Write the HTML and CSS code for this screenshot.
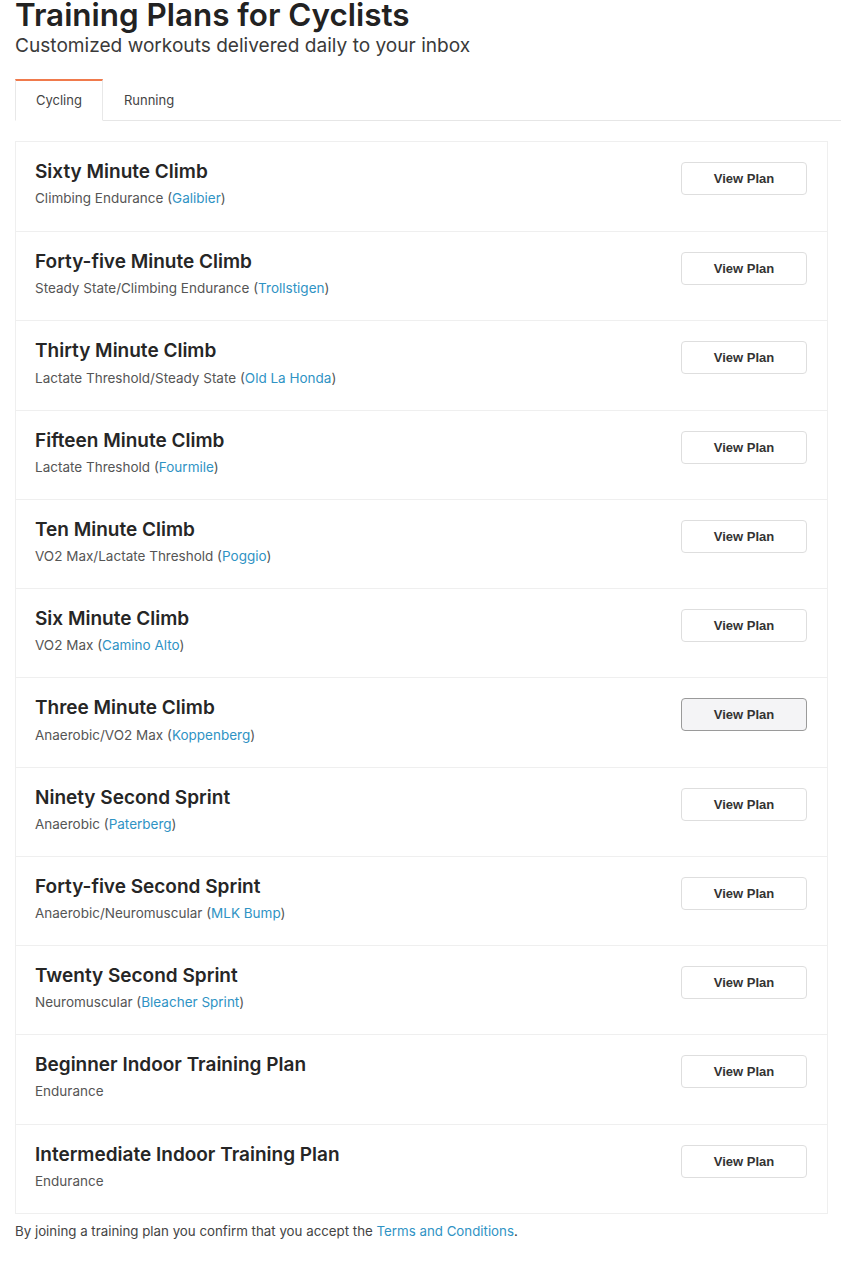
FILE: index.html
```html
<!DOCTYPE html>
<html lang="en">
<head>
<meta charset="utf-8">
<title>Training Plans for Cyclists</title>
<link rel="stylesheet" href="styles.css">
</head>
<body>
<div class="page">
  <header class="header">
    <h1 class="title">Training Plans for Cyclists</h1>
    <p class="subtitle">Customized workouts delivered daily to your inbox</p>
  </header>
  <nav class="tabs">
    <a class="tab tab-active">Cycling</a>
    <a class="tab">Running</a>
  </nav>
  <ul class="plans">
    <li class="plan"><div class="plan-info"><h3 class="plan-name">Sixty Minute Climb</h3><p class="plan-desc">Climbing Endurance (<a class="link">Galibier</a>)</p></div><button class="btn">View Plan</button></li>
    <li class="plan"><div class="plan-info"><h3 class="plan-name">Forty-five Minute Climb</h3><p class="plan-desc">Steady State/Climbing Endurance (<a class="link">Trollstigen</a>)</p></div><button class="btn">View Plan</button></li>
    <li class="plan"><div class="plan-info"><h3 class="plan-name">Thirty Minute Climb</h3><p class="plan-desc">Lactate Threshold/Steady State (<a class="link">Old La Honda</a>)</p></div><button class="btn">View Plan</button></li>
    <li class="plan"><div class="plan-info"><h3 class="plan-name">Fifteen Minute Climb</h3><p class="plan-desc">Lactate Threshold (<a class="link">Fourmile</a>)</p></div><button class="btn">View Plan</button></li>
    <li class="plan"><div class="plan-info"><h3 class="plan-name">Ten Minute Climb</h3><p class="plan-desc">VO2 Max/Lactate Threshold (<a class="link">Poggio</a>)</p></div><button class="btn">View Plan</button></li>
    <li class="plan"><div class="plan-info"><h3 class="plan-name">Six Minute Climb</h3><p class="plan-desc">VO2 Max (<a class="link">Camino Alto</a>)</p></div><button class="btn">View Plan</button></li>
    <li class="plan"><div class="plan-info"><h3 class="plan-name">Three Minute Climb</h3><p class="plan-desc">Anaerobic/VO2 Max (<a class="link">Koppenberg</a>)</p></div><button class="btn btn-hover">View Plan</button></li>
    <li class="plan"><div class="plan-info"><h3 class="plan-name">Ninety Second Sprint</h3><p class="plan-desc">Anaerobic (<a class="link">Paterberg</a>)</p></div><button class="btn">View Plan</button></li>
    <li class="plan"><div class="plan-info"><h3 class="plan-name">Forty-five Second Sprint</h3><p class="plan-desc">Anaerobic/Neuromuscular (<a class="link">MLK Bump</a>)</p></div><button class="btn">View Plan</button></li>
    <li class="plan"><div class="plan-info"><h3 class="plan-name">Twenty Second Sprint</h3><p class="plan-desc">Neuromuscular (<a class="link">Bleacher Sprint</a>)</p></div><button class="btn">View Plan</button></li>
    <li class="plan"><div class="plan-info"><h3 class="plan-name">Beginner Indoor Training Plan</h3><p class="plan-desc">Endurance</p></div><button class="btn">View Plan</button></li>
    <li class="plan"><div class="plan-info"><h3 class="plan-name">Intermediate Indoor Training Plan</h3><p class="plan-desc">Endurance</p></div><button class="btn">View Plan</button></li>
  </ul>
  <p class="terms">By joining a training plan you confirm that you accept the <a class="link">Terms and Conditions</a>.</p>
</div>
</body>
</html>
```
FILE: styles.css
```css
* { box-sizing: border-box; }
html, body { margin: 0; padding: 0; background: #fff; }
body {
  font-family: Inter, "Noto Sans", sans-serif;
  color: #2a2a2a;
  overflow: hidden;
}
.page {
  padding-left: 15px;
}
.header { margin-top: -1px; }
.title {
  margin: 0;
  font-size: 31.4px;
  line-height: 32px;
  font-weight: 600;
  color: #222;
}
.subtitle {
  margin: 2px 0 0;
  font-size: 19.1px;
  line-height: 24px;
  font-weight: 400;
  color: #3a3a3a;
}
.tabs {
  display: flex;
  margin-top: 22px;
  border-bottom: 1px solid #e6e6e6;
}
.tab {
  display: block;
  padding: 9px 20px 10px;
  font-size: 13px;
  line-height: 20px;
  color: #444;
  border: 1px solid transparent;
  border-top-width: 2px;
  margin-bottom: -1px;
}
.tab-active {
  border-color: #e8e8e8;
  border-top-color: #f07a4c;
  border-bottom-color: #fff;
  background: #fff;
}
.plans {
  list-style: none;
  margin: 20px 13px 0 0;
  padding: 0;
  border: 1px solid #efefef;
}
.plan {
  display: flex;
  justify-content: space-between;
  align-items: flex-start;
  padding: 19px 20px 22.15px 19px;
  border-top: 1px solid #efefef;
}
.plan:first-child { border-top: none; padding-bottom: 23.15px; }
.plan-name {
  margin: 0;
  font-size: 19px;
  line-height: 22.8px;
  font-weight: 600;
  color: #262626;
}
.plan-desc {
  margin: 4.3px 0 0;
  font-size: 13.5px;
  line-height: 20px;
  color: #555;
}
.link {
  color: #2f93c4;
  text-decoration: none;
}
.btn {
  width: 126px;
  height: 33px;
  margin-top: 1px;
  border: 1px solid #dedede;
  border-radius: 4px;
  background: #fff;
  font-family: "Liberation Sans", Arial, sans-serif;
  font-weight: 700;
  font-size: 13px;
  color: #333;
  padding: 0;
}
.btn-hover {
  background: #f4f4f6;
  border-color: #9a9a9a;
}
.terms {
  margin: 7px 0 0;
  font-size: 13.3px;
  line-height: 20px;
  color: #444;
}
```
